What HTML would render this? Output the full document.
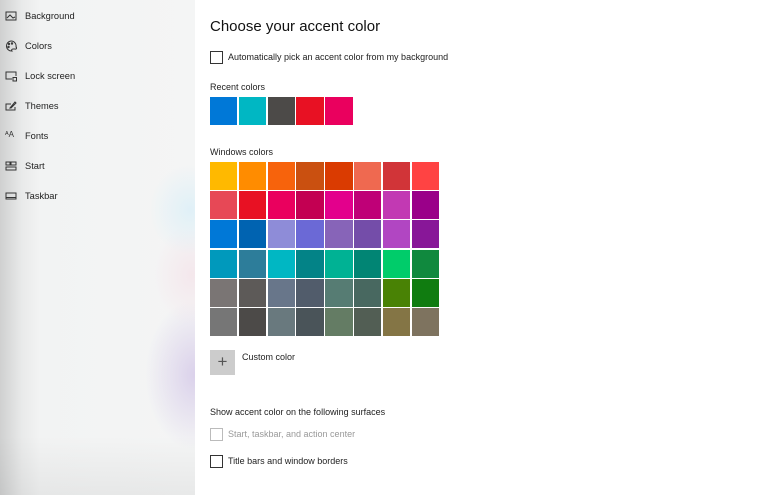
<!DOCTYPE html>
<html><head><meta charset="utf-8"><style>
*{margin:0;padding:0;box-sizing:border-box}
body{width:768px;height:495px;overflow:hidden;background:#fff;font-family:"Segoe UI","Liberation Sans",sans-serif;color:#1f1f1f;position:relative}
#side{position:absolute;left:0;top:0;width:195px;height:495px;
background:
radial-gradient(ellipse 40px 45px at 190px 210px,rgba(215,238,248,.7),transparent),
radial-gradient(ellipse 40px 50px at 192px 275px,rgba(245,222,230,.6),transparent),
radial-gradient(ellipse 50px 75px at 195px 375px,rgba(212,200,232,.8),transparent),
linear-gradient(to bottom,rgba(0,0,0,0) 88%,rgba(0,0,0,.05)),
linear-gradient(to right,#cfd0d0 0px,#e9eaea 22px,#f2f3f3 40px,#f4f5f5 195px);}
.it{position:absolute;left:25px;font-size:9.3px;color:#222}
.ic{position:absolute;left:5px;width:12px;height:12px}
.t{position:absolute;left:210px;font-size:9px;color:#222}
.cb{position:absolute;left:210px;width:13px;height:13px;border:1.3px solid #333}
.sw{position:absolute;width:27.4px;height:28px}
</style></head><body>
<div id="side">
<svg class="ic" style="top:10px" viewBox="0 0 12 12" fill="none" stroke="#333" stroke-width="1"><rect x="1" y="2" width="10" height="8"/><path d="M2 8l3-3 3 3 2-1"/></svg><div class="it" style="top:11px">Background</div>
<svg class="ic" style="top:40px" viewBox="0 0 12 12" fill="none" stroke="#333" stroke-width="1"><path d="M6 1a5 5 0 1 0 1 10c-1-1 0-2 1-2h2a1 1 0 0 0 1-2A5 5 0 0 0 6 1z"/><circle cx="4" cy="4" r=".7"/><circle cx="7" cy="3.5" r=".7"/><circle cx="3.5" cy="7" r=".7"/></svg><div class="it" style="top:41px">Colors</div>
<svg class="ic" style="top:70px" viewBox="0 0 12 12" fill="none" stroke="#333" stroke-width="1"><path d="M7 9H1V2h10v4"/><rect x="8" y="7.5" width="3.5" height="3.5"/></svg><div class="it" style="top:71px">Lock screen</div>
<svg class="ic" style="top:100px" viewBox="0 0 12 12" fill="none" stroke="#333" stroke-width="1"><path d="M6 4H1v6h9V7"/><path d="M5 8l5-6 1 1-5 5z"/></svg><div class="it" style="top:101px">Themes</div>
<div class="ic" style="top:130px;font-size:8px;line-height:10px;color:#333">ᴬA</div><div class="it" style="top:131px">Fonts</div>
<svg class="ic" style="top:160px" viewBox="0 0 12 12" fill="none" stroke="#333" stroke-width="1"><rect x="1" y="2" width="4" height="3"/><rect x="6" y="2" width="5" height="3"/><rect x="1" y="7" width="10" height="3"/></svg><div class="it" style="top:161px">Start</div>
<svg class="ic" style="top:190px" viewBox="0 0 12 12" fill="none" stroke="#333" stroke-width="1"><rect x="1" y="3" width="10" height="6"/><path d="M1 7.5h10"/></svg><div class="it" style="top:191px">Taskbar</div>
</div>
<div class="t" style="top:18px;font-size:15px;color:#111">Choose your accent color</div>
<div class="cb" style="top:51px"></div><div class="t" style="left:228px;top:52px">Automatically pick an accent color from my background</div>
<div class="t" style="top:82px">Recent colors</div>
<div class="t" style="top:147px">Windows colors</div>
<div id="g"></div>
<div style="position:absolute;left:210px;top:350px;width:25px;height:25px;background:#ccc;color:#555;font-size:17px;line-height:24px;text-align:center;font-weight:300">+</div>
<div class="t" style="left:242px;top:352px">Custom color</div>
<div class="t" style="top:407px">Show accent color on the following surfaces</div>
<div class="cb" style="top:428px;border-color:#bbb"></div><div class="t" style="left:228px;top:429px;color:#999">Start, taskbar, and action center</div>
<div class="cb" style="top:455px"></div><div class="t" style="left:228px;top:456px">Title bars and window borders</div>
<script>
var rc=["#0078D7","#00B7C3","#4C4A48","#E81123","#EA005E"];
var w=["FFB900 FF8C00 F7630C CA5010 DA3B01 EF6950 D13438 FF4343","E74856 E81123 EA005E C30052 E3008C BF0077 C239B3 9A0089","0078D7 0063B1 8E8CD8 6B69D6 8764B8 744DA9 B146C2 881798","0099BC 2D7D9A 00B7C3 038387 00B294 018574 00CC6A 10893E","7A7574 5D5A58 68768A 515C6B 567C73 486860 498205 107C10","767676 4C4A48 69797E 4A5459 647C64 525E54 847545 7E735F"];
var h="",p=28.8,q=29.2;
rc.forEach(function(c,i){h+='<div class="sw" style="left:'+(210+i*p)+'px;top:97px;background:'+c+'"></div>';});
w.forEach(function(r,j){r.split(" ").forEach(function(c,i){h+='<div class="sw" style="left:'+(210+i*p)+'px;top:'+(162+j*q)+'px;background:#'+c+'"></div>';});});
document.getElementById("g").innerHTML=h;
</script>
</body></html>
